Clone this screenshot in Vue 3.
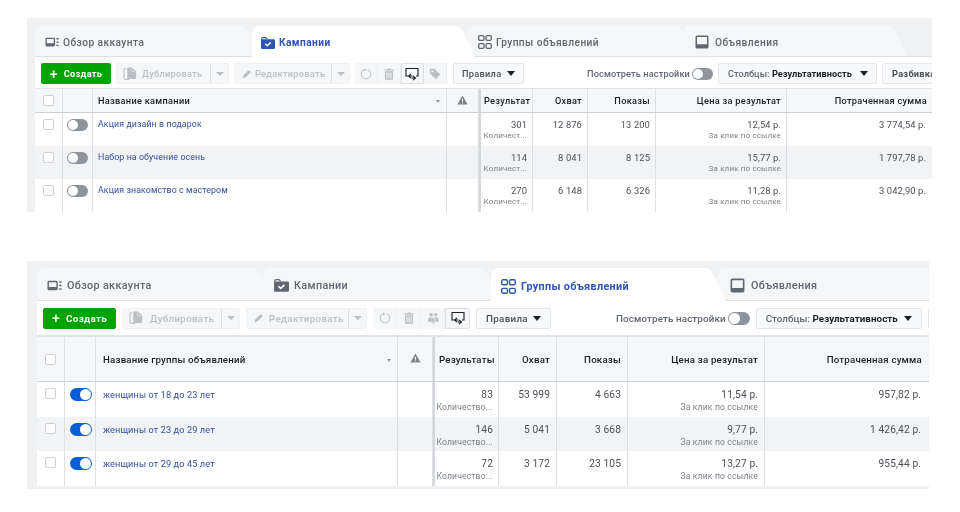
<script setup>
const panels = [
  {
    cls: 'p1',
    active: 1,
    nameHead: 'Название кампании',
    resHead: 'Результат',
    toggleOn: false,
    tools: ['reload', 'trash', 'compare', 'tag'],
    extra: 'Разбивка',
    rows: [
      { name: 'Акция дизайн в подарок', res: '301', sub: 'Количест...', reach: '12 876', imp: '13 200', cost: '12,54 р.', spend: '3 774,54 р.' },
      { name: 'Набор на обучение осень', res: '114', sub: 'Количест...', reach: '8 041', imp: '8 125', cost: '15,77 р.', spend: '1 797,78 р.' },
      { name: 'Акция знакомство с мастером', res: '270', sub: 'Количест...', reach: '6 148', imp: '6 326', cost: '11,28 р.', spend: '3 042,90 р.' },
    ],
  },
  {
    cls: 'p2',
    active: 2,
    nameHead: 'Название группы объявлений',
    resHead: 'Результаты',
    toggleOn: true,
    tools: ['reload', 'trash', 'people', 'compare'],
    extra: '',
    rows: [
      { name: 'женщины от 18 до 23 лет', res: '83', sub: 'Количество...', reach: '53 999', imp: '4 663', cost: '11,54 р.', spend: '957,82 р.' },
      { name: 'женщины от 23 до 29 лет', res: '146', sub: 'Количество...', reach: '5 041', imp: '3 668', cost: '9,77 р.', spend: '1 426,42 р.' },
      { name: 'женщины от 29 до 45 лет', res: '72', sub: 'Количество...', reach: '3 172', imp: '23 105', cost: '13,27 р.', spend: '955,44 р.' },
    ],
  },
]
const tabs = [
  { label: 'Обзор аккаунта', icon: 'overview' },
  { label: 'Кампании', icon: 'folder' },
  { label: 'Группы объявлений', icon: 'grid' },
  { label: 'Объявления', icon: 'ad' },
]
</script>

<template>
  <div class="page">
    <svg class="defs" aria-hidden="true">
      <symbol id="overview" viewBox="0 0 16 12">
        <path fill="currentColor" fill-rule="evenodd" d="M2 1h8a1.500 1.500 0 0 1 1.500 1.500v7A1.500 1.500 0 0 1 10 11H2A1.500 1.500 0 0 1 .5 9.500v-7A1.500 1.500 0 0 1 2 1zm0 1.500v5h8v-5z" />
        <path fill="currentColor" d="M13 1.500h2.500v1.500H13zM13 5.300h2.500v1.500H13zM13 9h2.500v1.500H13z" />
      </symbol>
      <symbol id="folder" viewBox="0 0 15 13">
        <path fill="currentColor" d="M1.500 2.500h12A1.300 1.300 0 0 1 15 3.800v7.700a1.300 1.300 0 0 1-1.300 1.300H1.300A1.300 1.300 0 0 1 0 11.500V3.500A1.500 1.500 0 0 1 1.500 2.500z" />
        <path fill="none" stroke="currentColor" stroke-width="1.200" d="M.8 3.500V1.800Q.8.700 2 .7h2.800q.8 0 1.200.8l.5 1" />
        <path fill="none" stroke="#fff" stroke-width="1.600" d="M4.500 7.200l2.200 2.200 3.800-3.600" />
      </symbol>
      <symbol id="grid" viewBox="0 0 14 14">
        <g fill="none" stroke="currentColor" stroke-width="1.300">
          <rect x=".7" y=".7" width="5.300" height="4.600" rx="1.200" />
          <rect x="8" y=".7" width="5.300" height="4.600" rx="1.200" />
          <rect x=".7" y="8.700" width="5.300" height="4.600" rx="1.200" />
          <rect x="8" y="8.700" width="5.300" height="4.600" rx="1.200" />
        </g>
      </symbol>
      <symbol id="ad" viewBox="0 0 14 14">
        <path fill="currentColor" fill-rule="evenodd" d="M2 .5h10A1.500 1.500 0 0 1 13.500 2v10a1.500 1.500 0 0 1-1.500 1.500H2A1.500 1.500 0 0 1 .5 12V2A1.500 1.500 0 0 1 2 .5zm0 1.500v7.300h10V2z" />
      </symbol>
      <symbol id="copy" viewBox="0 0 16 14">
        <path fill="none" stroke="currentColor" stroke-width="1.100" d="M3.200 1.200Q1 1.200 1 3v8q0 1.800 2.500 1.800h3" />
        <path fill="currentColor" d="M4.500 0h5l4.500 4v8.300H4.500z" />
        <path fill="#f5f6f7" d="M9.800.6v3.300h3.500l-.8.500H9.300V.6z" />
      </symbol>
      <symbol id="pencil" viewBox="0 0 12 12">
        <path fill="currentColor" d="M8 1.200l2.600 2.600-6.500 6.500L.8 11l.7-3.300z" />
      </symbol>
      <symbol id="reload" viewBox="0 0 12 12">
        <path fill="none" stroke="currentColor" stroke-width="1" d="M7.800 1.700a4.800 4.800 0 1 1-3.600 0" />
        <path fill="currentColor" d="M4 .3l2.500 1.600L4 3.300z" />
      </symbol>
      <symbol id="trash" viewBox="0 0 12 12">
        <path fill="currentColor" d="M4.500.5h3l.5 1h3v1H1v-1h3zM2 3.300h8V11q0 .8-.8.8H2.800Q2 11.800 2 11zm1.500 1.200v6h1v-6zm2 0v6h1v-6zm2 0v6h1v-6z" />
      </symbol>
      <symbol id="people" viewBox="0 0 13 12">
        <g fill="currentColor">
          <circle cx="4.500" cy="2.500" r="2" />
          <circle cx="9.500" cy="2.500" r="1.800" />
          <path d="M1 10V8q0-2.500 3.500-2.500T8 8v2zM9 5.300q3.500 0 3.500 2.700v2H9V8q0-1.600-1-2.400z" />
          <path d="M5 7.500h3.500V12H5z" opacity=".6" />
        </g>
      </symbol>
      <symbol id="compare" viewBox="0 0 14 13">
        <path fill="none" stroke="currentColor" stroke-width="1.100" d="M3 8.500H1V1h12v7.500h-2" />
        <path fill="none" stroke="currentColor" stroke-width="1.100" d="M3.500 8.500h4M6 6.300L3.500 8.500 6 10.700M10.500 10.500h-4M8 8.300l2.500 2.200L8 12.700" />
      </symbol>
      <symbol id="tag" viewBox="0 0 12 12">
        <path fill="currentColor" fill-rule="evenodd" d="M1.300.8h4.200l5.800 5.800-4.400 4.600L.8 5.400V1.300zM3.300 2.200a1.100 1.100 0 1 0 .01 0z" />
      </symbol>
      <symbol id="warn" viewBox="0 0 12 11">
        <path fill="currentColor" fill-rule="evenodd" d="M6 .5l5.600 10H.4zM5.400 4v3.500h1.200V4zm0 4.200v1.200h1.200V8.200z" />
      </symbol>
    </svg>

    <section v-for="panel in panels" :key="panel.cls" class="panel" :class="panel.cls">
      <nav class="tabs">
        <div
          v-for="(tab, i) in tabs"
          :key="tab.label"
          class="tab"
          :class="[`t${i}`, { active: i === panel.active }]"
        >
          <svg class="tab-icon" :class="`ic-${tab.icon}`"><use :href="`#${tab.icon}`" /></svg>
          <span>{{ tab.label }}</span>
        </div>
      </nav>

      <div class="toolbar">
        <button class="btn create"><span class="plus">+</span>Создать</button>

        <div class="btn split dup">
          <span class="split-main">
            <svg class="tool-icon copy"><use href="#copy" /></svg>Дублировать
          </span>
          <span class="split-caret"><i class="caret" /></span>
        </div>

        <div class="btn split edit">
          <span class="split-main">
            <svg class="tool-icon pencil"><use href="#pencil" /></svg>Редактировать
          </span>
          <span class="split-caret"><i class="caret" /></span>
        </div>

        <div class="tools">
          <span v-for="t in panel.tools" :key="t" class="tool" :class="{ on: t === 'compare' }">
            <svg class="tool-icon"><use :href="`#${t}`" /></svg>
          </span>
        </div>

        <div class="btn rules">Правила<i class="caret dark" /></div>

        <div class="preview">
          Посмотреть настройки
          <span class="switch off" />
        </div>

        <div class="btn columns">
          <span>Столбцы:&nbsp;<b>Результативность</b></span><i class="caret dark" />
        </div>

        <div class="btn extra">{{ panel.extra }}</div>
      </div>

      <div class="table">
        <div class="row head">
          <div class="cell center"><span class="check white" /></div>
          <div class="cell" />
          <div class="cell name-head">
            <span>{{ panel.nameHead }}</span><i class="sort" />
          </div>
          <div class="cell center warn-cell"><svg class="warn"><use href="#warn" /></svg></div>
          <div class="cell num res">{{ panel.resHead }}</div>
          <div class="cell num">Охват</div>
          <div class="cell num">Показы</div>
          <div class="cell num">Цена за результат</div>
          <div class="cell num last">Потраченная сумма</div>
        </div>

        <div v-for="row in panel.rows" :key="row.name" class="row body">
          <div class="cell chk"><span class="check" /></div>
          <div class="cell tog"><span class="switch" :class="panel.toggleOn ? 'on' : 'off'" /></div>
          <div class="cell link">{{ row.name }}</div>
          <div class="cell" />
          <div class="cell val res">{{ row.res }}<small>{{ row.sub }}</small></div>
          <div class="cell val">{{ row.reach }}</div>
          <div class="cell val">{{ row.imp }}</div>
          <div class="cell val">{{ row.cost }}<small>За клик по ссылке</small></div>
          <div class="cell val last">{{ row.spend }}</div>
        </div>
      </div>
    </section>
  </div>
</template>

<style>
html, body { margin: 0; background: #fff; }
</style>

<style scoped>
.page {
  width: 960px;
  height: 512px;
  overflow: hidden;
  background: #fff;
  font-family: Roboto, "Liberation Sans", sans-serif;
  filter: blur(0.35px);
  padding-top: 18px;
  box-sizing: border-box;
}
.defs { position: absolute; width: 0; height: 0; }

.panel {
  box-sizing: border-box;
  margin-left: 27px;
  background: #f0f1f3;
  overflow: hidden;
}
.p1 {
  --cols: 28px 30px 354px 32px 54px 55px 68px 131px 145px;
  --fs: 9.4px;
  --sub: 8px;
  --link: 8.8px;
  width: 905px;
  height: 194px;
  padding: 8px 0 0 8px;
}
.p2 {
  --cols: 28px 31px 302px 35px 66px 58px 71px 137px 163px;
  --fs: 10.2px;
  --sub: 8.6px;
  --link: 9.2px;
  width: 902px;
  height: 228px;
  padding: 7px 0 0 10px;
  margin-top: 49px;
}

/* Tabs */
.tabs {
  display: flex;
  box-sizing: border-box;
  background: #f0f1f3;
  border-bottom: 1px solid #dddfe2;
  position: relative;
  z-index: 0;
}
.p1 .tabs { height: 31px; }
.p2 .tabs { height: 33px; }
.tab {
  position: relative;
  box-sizing: border-box;
  display: flex;
  align-items: center;
  flex: none;
  background: #f5f6f7;
  border-radius: 7px 0 0 0;
  color: #606770;
  font-weight: 500;
  white-space: nowrap;
  height: 100%;
}
.p1 .tab { font-size: 10.2px; letter-spacing: .42px; padding: 2px 0 0 10px; }
.p2 .tab { font-size: 10.8px; letter-spacing: .34px; padding: 3px 0 0 10px; }
.tab::after {
  content: "";
  position: absolute;
  top: 0;
  bottom: 0;
  right: -9px;
  width: 18px;
  background: inherit;
  border-radius: 0 7px 0 0;
  transform: skewX(24deg);
  z-index: -1;
}
.tab.active {
  background: #fff;
  color: #2f55b4;
  font-weight: 700;
  z-index: 5;
  height: calc(100% + 1px);
}
.t0 { z-index: 4; }
.t1 { z-index: 3; }
.t2 { z-index: 2; }
.t3 { z-index: 1; }
.p1 .t0 { width: 210px; }
.p1 .t1 { width: 206.5px; margin-left: 7px; padding-left: 9px; }
.p1 .t2 { width: 209.5px; margin-left: 9.500px; }
.p1 .t3 { width: 208px; margin-left: 5.500px; padding-left: 12px; }
.p2 .t0 { width: 218.5px; }
.p2 .t1 { width: 220px; margin-left: 7.500px; padding-left: 11px; }
.p2 .t2 { width: 218px; margin-left: 8px; }
.p2 .t3 { width: 220px; margin-left: 8px; padding-left: 13px; }
.tab-icon { flex: none; width: 14px; height: 14px; margin-right: 4px; }
.p2 .tab-icon { width: 15px; height: 15px; margin-right: 5px; }
.t3 .tab-icon { margin-right: 6px; }

/* Toolbar */
.toolbar {
  display: flex;
  align-items: center;
  box-sizing: border-box;
  background: #fff;
  white-space: nowrap;
  overflow: hidden;
  font-weight: 500;
}
.p1 .toolbar { height: 31px; padding: 2px 0 0 6px; gap: 5px; font-size: 9.2px; letter-spacing: .3px; }
.p2 .toolbar { height: 34px; padding-left: 6px; gap: 6px; font-size: 9.8px; letter-spacing: .3px; }
.btn {
  flex: none;
  box-sizing: border-box;
  display: flex;
  align-items: center;
  border: 1px solid #e6e7ea;
  border-radius: 2px;
  background: #f5f6f7;
  color: #4b4f56;
  font: inherit;
  letter-spacing: inherit;
  margin: 0;
  padding: 0;
}
.p1 .btn, .p1 .tools { height: 21px; }
.p2 .btn, .p2 .tools { height: 21px; }
.create {
  background: #00a400;
  border-color: #00a400;
  color: #fff;
  font-weight: 700;
  justify-content: center;
}
.p1 .create { width: 70px; }
.p2 .create { width: 73px; }
.plus { font-size: 14px; font-weight: 500; line-height: 1; margin-right: 6px; }
.split { color: #bcc0c4; border-color: #f0f1f3; }
.split-main { flex: 1; display: flex; align-items: center; height: 100%; padding-left: 6px; }
.split-caret {
  flex: none;
  box-sizing: border-box;
  width: 18px;
  height: 100%;
  border-left: 1px solid #dddfe2;
  display: flex;
  align-items: center;
  justify-content: center;
}
.p1 .dup { width: 113px; }
.p1 .edit { width: 116px; }
.p2 .dup { width: 118px; }
.p2 .edit { width: 121px; }
.tool-icon { width: 12px; height: 12px; color: #bcc0c4; }
.copy { width: 15px; height: 14px; margin-right: 6px; }
.pencil { width: 10px; height: 10px; margin: 0 5px 0 1px; }
.p1 .copy { margin-right: 4px; }
.p1 .pencil { margin-right: 3px; }
.caret {
  display: block;
  width: 0;
  height: 0;
  border-left: 4px solid transparent;
  border-right: 4px solid transparent;
  border-top: 4px solid #bcc0c4;
}
.caret.dark { border-top-color: #1c1e21; border-left-width: 4.500px; border-right-width: 4.500px; border-top-width: 5px; }
.tools { flex: none; display: flex; box-sizing: border-box; background: #f5f6f7; border-radius: 2px; }
.p1 .tools { width: 92px; }
.p2 .tools { width: 97px; }
.tool {
  flex: 1;
  box-sizing: border-box;
  display: flex;
  align-items: center;
  justify-content: center;
  border-right: 1px solid #eceef0;
}
.tool.on { background: #f5f6f7; border: 1px solid #dddfe2; border-radius: 2px; }
.tool.on .tool-icon { color: #1c1e21; width: 14px; height: 14px; }
.rules { justify-content: space-between; background: #f8f9fa; color: #4b4f56; }
.p1 .rules { width: 71px; padding: 0 8px; margin-left: 1px; }
.p2 .rules { width: 75px; padding: 0 9px; }
.preview { flex: none; display: flex; align-items: center; color: #606770; letter-spacing: .12px; }
.p1 .preview { margin-left: 58px; }
.p2 .preview { margin-left: 59px; }
.columns { justify-content: space-between; background: #f8f9fa; color: #606770; letter-spacing: .05px; }
.columns b { color: #1c1e21; font-weight: 700; }
.p1 .columns { width: 159px; padding: 0 8px 0 9px; }
.p2 .columns { width: 166px; padding: 0 9px; }
.extra { background: #f8f9fa; color: #4b4f56; font-weight: 700; padding-left: 9px !important; }
.p1 .extra { width: 70px; }
.p2 .extra { width: 30px; }

.switch {
  position: relative;
  display: block;
  box-sizing: border-box;
  flex: none;
  border-radius: 7px;
  width: 21px;
  height: 12px;
}
.preview .switch { margin-left: 2px; }
.p2 .switch { width: 22px; height: 13px; }
.switch::after {
  content: "";
  position: absolute;
  top: 1px;
  width: 10px;
  height: 10px;
  border-radius: 50%;
  background: #fff;
}
.p2 .switch::after { width: 11px; height: 11px; }
.switch.off { background: #8d949e; }
.switch.off::after { left: 1px; }
.switch.on { background: #0a5fd6; }
.switch.on::after { right: 1px; }

/* Table */
.table { background: #fff; }
.row { display: grid; grid-template-columns: var(--cols); }
.cell {
  box-sizing: border-box;
  border-right: 1px solid #dddfe2;
  min-width: 0;
  overflow: hidden;
  white-space: nowrap;
}
.cell.last { border-right: 0; }
.res { border-left: 2px solid #d3d6da; }
.head {
  box-sizing: border-box;
  background: #f5f6f7;
  color: #1c1e21;
  font-weight: 500;
  font-size: 9.2px;
  letter-spacing: .3px;
  border-top: 1px solid #e3e5e8;
  border-bottom: 1px solid #cdd0d4;
}
.p1 .head { height: 25px; }
.p2 .head { height: 47px; font-size: 9.7px; letter-spacing: .2px; border-top-width: 2px; }
.head .cell { display: flex; align-items: center; }
.center { justify-content: center; }
.name-head { padding: 0 6px 0 5px; justify-content: space-between; font-weight: 500; }
.p2 .name-head { padding-left: 7px; }
.sort {
  width: 0;
  height: 0;
  margin-top: 2px;
  border-left: 2.500px solid transparent;
  border-right: 2.500px solid transparent;
  border-top: 3px solid #90949c;
}
.warn { width: 11px; height: 10px; color: #7d8288; margin-top: -2px; }
.head .num { justify-content: flex-end; padding-right: 5px; }
.head .res { justify-content: flex-start; padding: 0 0 0 3px; }
.p2 .head .res { padding-left: 4px; }
.p2 .head .num { padding-right: 6px; }

.body:nth-child(odd) { background: #f2f3f5; }
.p1 .body { height: 33px; }
.p2 .body { height: 34.500px; }
.check {
  display: block;
  box-sizing: border-box;
  width: 11px;
  height: 11px;
  border: 1px solid #ced0d4;
  border-radius: 2px;
  background: #fff;
}
.chk { display: flex; justify-content: center; padding-top: 6px; }
.tog { display: flex; justify-content: center; padding-top: 6px; }
.p2 .tog { padding-left: 2px; }
.link {
  color: #32509c;
  font-size: var(--link);
  line-height: 12px;
  letter-spacing: .1px;
  padding: 5px 6px 0 5px;
}
.p2 .link { padding: 7px 6px 0 7px; }
.val {
  text-align: right;
  color: #4b4f56;
  font-size: var(--fs);
  letter-spacing: .1px;
  padding: 6px 5px 0 0;
}
.val.last { padding-right: 6px; }
.p2 .val { padding: 7px 6px 0 0; }
.p2 .val.res { padding-right: 5px; }
.p2 .val.last { padding-right: 7px; }
.val small {
  display: block;
  margin-top: 1px;
  color: #7d8288;
  font-size: var(--sub);
  letter-spacing: .15px;
}
.p2 .val small { margin-top: 2px; }
</style>
